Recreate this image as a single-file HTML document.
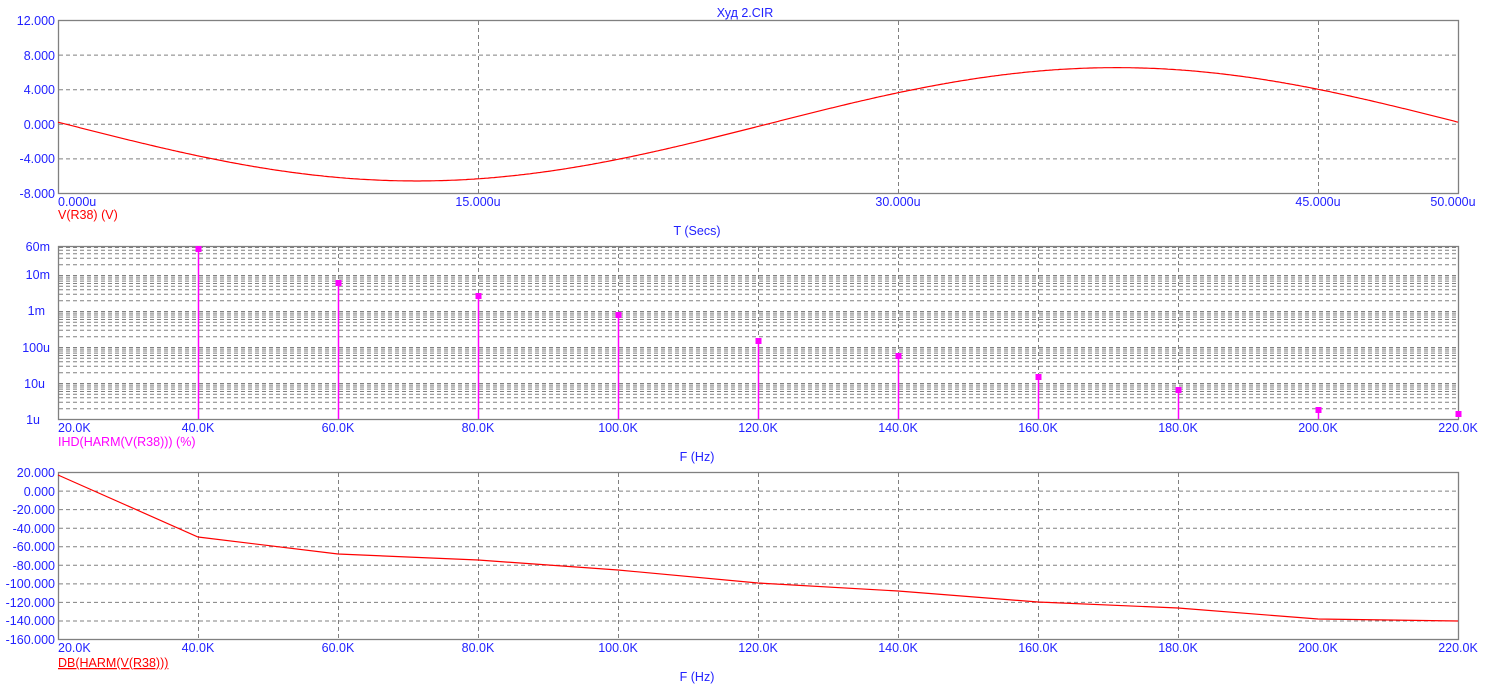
<!DOCTYPE html><html><head><meta charset="utf-8"><style>
html,body{margin:0;padding:0;background:#fff;width:1490px;height:700px;overflow:hidden}
svg{display:block;font-family:"Liberation Sans","DejaVu Sans",sans-serif;font-size:12.5px}
.b{fill:#2222ff}
</style></head><body>
<svg id="s" width="1490" height="700" xmlns="http://www.w3.org/2000/svg">
<g id="grid" stroke="#808080" stroke-width="1" stroke-dasharray="4,3" fill="none"></g>
<g fill="none" stroke="#808080" stroke-width="1.3">
<rect x="58.5" y="20.5" width="1400" height="173"/>
<rect x="58.5" y="246.5" width="1400" height="173"/>
<rect x="58.5" y="472.5" width="1400" height="167"/>
</g>
<g id="data"></g>
<text x="745" y="17" text-anchor="middle" class="b">Худ  2.CIR</text>
<g class="b" text-anchor="end">
<text x="55" y="25">12.000</text><text x="55" y="60">8.000</text><text x="55" y="94">4.000</text>
<text x="55" y="129">0.000</text><text x="55" y="163">-4.000</text><text x="55" y="198">-8.000</text>
<text x="50" y="251">60m</text><text x="50" y="279">10m</text><text x="45" y="315">1m</text>
<text x="50" y="352">100u</text><text x="45" y="388">10u</text><text x="40" y="424">1u</text>
<text x="55" y="477">20.000</text><text x="55" y="496">0.000</text><text x="55" y="514">-20.000</text>
<text x="55" y="533">-40.000</text><text x="55" y="551">-60.000</text><text x="55" y="570">-80.000</text>
<text x="55" y="588">-100.000</text><text x="55" y="607">-120.000</text><text x="55" y="625">-140.000</text>
<text x="55" y="644">-160.000</text>
</g>
<text class="b" x="58" y="206">0.000u</text>
<g class="b" text-anchor="middle">
<text x="478" y="206">15.000u</text><text x="898" y="206">30.000u</text>
<text x="1318" y="206">45.000u</text><text x="1453" y="206">50.000u</text>
<text x="697" y="235">T (Secs)</text><text x="697" y="461">F (Hz)</text><text x="697" y="681">F (Hz)</text>
</g>
<text class="b" x="58" y="432">20.0K</text><text class="b" x="58" y="652">20.0K</text>
<g class="b" text-anchor="middle" id="fl"></g>
<text x="58" y="219" fill="#ff0000">V(R38) (V)</text>
<text x="58" y="446" fill="#ff00ff">IHD(HARM(V(R38))) (%)</text>
<text x="58" y="667" fill="#ff0000" text-decoration="underline">DB(HARM(V(R38)))</text>
</svg>
<script>
var NS="http://www.w3.org/2000/svg",g=document.getElementById('grid'),d=document.getElementById('data'),fl=document.getElementById('fl');
function L(p,x1,y1,x2,y2,c,w){var l=document.createElementNS(NS,'line');l.setAttribute('x1',x1);l.setAttribute('y1',y1);l.setAttribute('x2',x2);l.setAttribute('y2',y2);if(c){l.setAttribute('stroke',c);l.setAttribute('stroke-width',w||1);}p.appendChild(l);}
for(var i=1;i<5;i++){var y=20.5+i*34.6;L(g,59,y,1458,y);}
[478.5,898.5,1318.5].forEach(function(x){L(g,x,21,x,193);});
for(var dec=0;dec<5;dec++){var base=419.5-dec*36;for(var k=1;k<=9;k++){var y=base-Math.log10(k)*36;if(y<247)continue;if(k==1&&dec==0)continue;L(g,59,y.toFixed(1),1458,y.toFixed(1));}}
L(g,59,247.5,1458,247.5);
for(var j=1;j<9;j++){var x=58.5+j*140;L(g,x,247,x,419);L(g,x,473,x,639);}
for(var i=1;i<9;i++){var y=472.5+i*18.56;L(g,59,y.toFixed(1),1458,y.toFixed(1));}
var labs=['','40.0K','60.0K','80.0K','100.0K','120.0K','140.0K','160.0K','180.0K','200.0K','220.0K'];
labs.forEach(function(t,i){if(!t)return;[432,652].forEach(function(yy){var e=document.createElementNS(NS,'text');var x=58+i*140;e.setAttribute('x',x);e.setAttribute('y',yy);e.textContent=t;fl.appendChild(e);});});
var p='';for(var x=58;x<=1458;x+=2){var t=(x-58)/1400*50;var v=-6.55*Math.sin(2*Math.PI*(t-0.3)/50);p+=(x==58?'M':'L')+x+','+(20.5+(12-v)*8.65).toFixed(1);}
var e=document.createElementNS(NS,'path');e.setAttribute('d',p);e.setAttribute('stroke','#ff0000');e.setAttribute('fill','none');e.setAttribute('stroke-width','1.2');d.appendChild(e);
var st=[249,283,296,315,341,356,377,390,410,414];
st.forEach(function(y,i){var x=198.5+i*140;if(i<9)L(d,x,y,x,419,'#ff00ff',1.5);var r=document.createElementNS(NS,'rect');r.setAttribute('x',x-3);r.setAttribute('y',y-3);r.setAttribute('width',6);r.setAttribute('height',6);r.setAttribute('fill','#ff00ff');d.appendChild(r);});
var pts=[475,537,554,560,570,583,591,602,608,619,621];p='';pts.forEach(function(y,i){p+=(i?'L':'M')+(58+i*140)+','+y;});
e=document.createElementNS(NS,'path');e.setAttribute('d',p);e.setAttribute('stroke','#ff0000');e.setAttribute('fill','none');e.setAttribute('stroke-width','1.2');d.appendChild(e);
</script>
</body></html>
